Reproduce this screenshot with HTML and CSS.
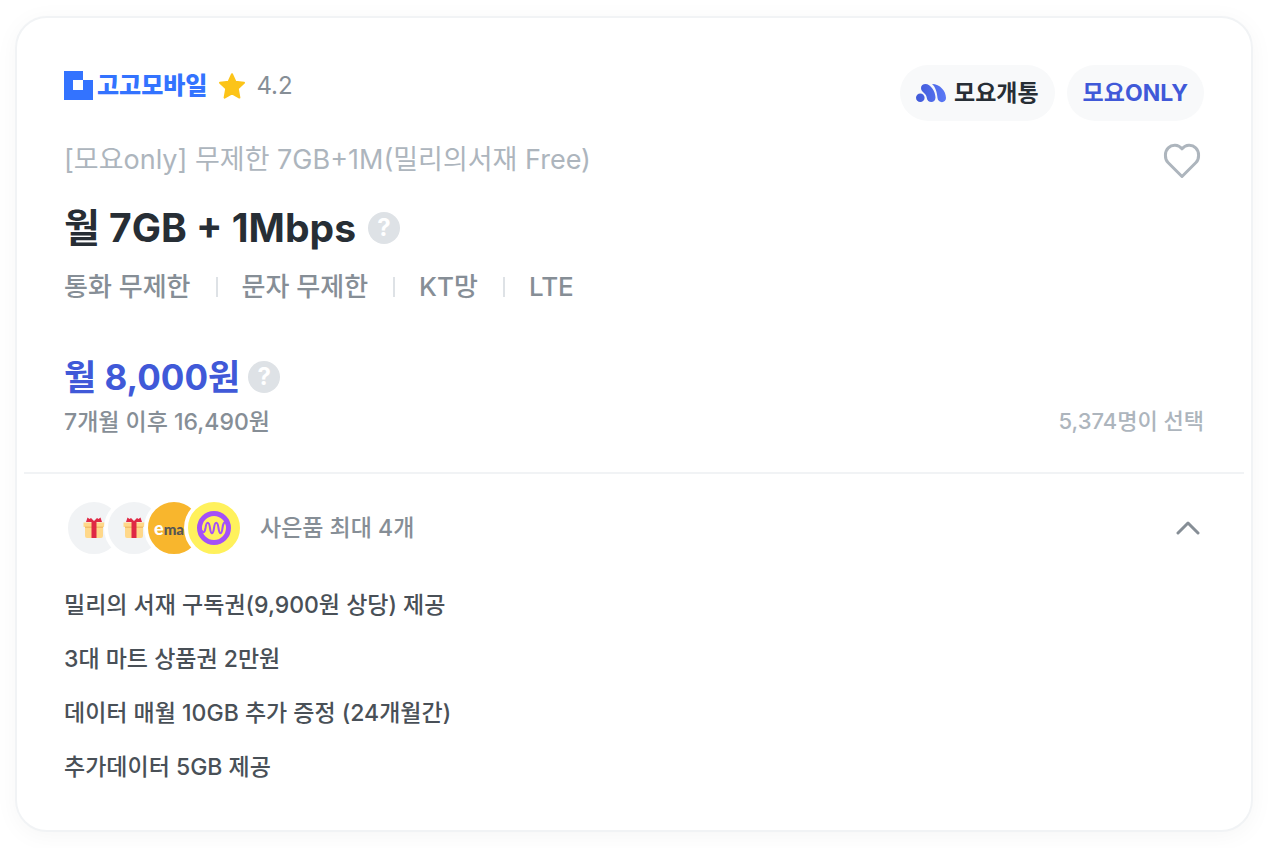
FILE: index.html
```html
<!DOCTYPE html>
<html lang="ko">
<head>
<meta charset="utf-8">
<meta name="viewport" content="width=device-width, initial-scale=1">
<title>고고모바일 요금제</title>
<link rel="stylesheet" href="styles.css">
</head>
<body>
<article class="card">
  <div class="plan">
    <header class="top">
      <div class="carrier">
        <svg class="carrier-mark" viewBox="0 0 29 29" aria-hidden="true"><path fill="#3373ff" fill-rule="evenodd" d="M0 0H19V9H29V29H0ZM9 9V19H19V9Z"/></svg>
        <span class="carrier-name">고고모바일</span>
        <svg class="star" viewBox="0 0 28 28" aria-hidden="true"><path fill="#fcc419" stroke="#fcc419" stroke-width="2" stroke-linejoin="round" d="M14 2.2 17.4 9.7 26 10.8 19.8 16.6 21.4 25.6 14 21.4 6.6 25.6 8.2 16.6 2 10.8 10.6 9.7Z"/></svg>
        <span class="rating">4.2</span>
      </div>
      <div class="badges">
        <span class="badge">
          <svg class="badge-mark" viewBox="0 0 30 20" aria-hidden="true">
            <defs><linearGradient id="moyo" gradientUnits="userSpaceOnUse" x1="0" x2="30" y1="0" y2="0"><stop offset="0" stop-color="#4059d8"/><stop offset="1" stop-color="#5b79f6"/></linearGradient></defs>
            <g fill="url(#moyo)"><circle cx="4.300" cy="14.700" r="4.300"/><path d="M9.500 1C14.500 1 19.500 8.500 19.500 14.500C19.500 20.500 11.200 20.500 10.700 14.500C10.400 10 5 9.500 5 5C5 2.500 7 1 9.500 1Z"/><path d="M16 1C24 1 30 8 30 15C30 20.500 22 20.500 21.500 15C21 9 19.500 4 16 1Z"/></g>
          </svg>
          모요개통
        </span>
        <span class="badge badge-only">모요ONLY</span>
      </div>
    </header>
    <div class="name-row">
      <p class="plan-name">[모요only] 무제한 7GB+1M(밀리의서재 Free)</p>
      <button class="icon-button" type="button" aria-label="찜하기">
        <svg class="heart" viewBox="0 0 44 44" aria-hidden="true"><path fill="none" stroke="#adb5bd" stroke-width="3" stroke-linejoin="round" d="M22 38.500 8 24.500C4.500 21 4.500 13.500 8.300 9.900C12 6.200 18.300 6.300 22 10.800C25.700 6.300 32 6.200 35.700 9.900C39.500 13.500 39.500 21 36 24.500Z"/></svg>
      </button>
    </div>
    <div class="data-row">
      <h2 class="data">월 7GB + 1Mbps</h2>
      <button class="help" type="button" aria-label="데이터 안내">?</button>
    </div>
    <ul class="specs">
      <li class="spec">통화 무제한</li>
      <li class="spec">문자 무제한</li>
      <li class="spec">KT망</li>
      <li class="spec">LTE</li>
    </ul>
    <div class="price-row">
      <strong class="price">월 8,000원</strong>
      <button class="help" type="button" aria-label="가격 안내">?</button>
    </div>
    <div class="after-row">
      <span class="after">7개월 이후 16,490원</span>
      <span class="picked">5,374명이 선택</span>
    </div>
  </div>
  <section class="gifts">
    <button class="gift-toggle" type="button" aria-expanded="true">
      <span class="gift-icons">
        <span class="gift"><svg class="gift-box" viewBox="0 0 22 22" aria-hidden="true"><path fill="#ffd88a" d="M0.500 5.500H21.500V10H20V19Q20 21 18 21H4Q2 21 2 19V10H0.500Z"/><path fill="#f3bd69" d="M2 9.500H20V11H2Z"/><path fill="#df2844" d="M8.500 5H13.500V21H8.500ZM11 4 14 1 15.500 2 17.500 0.500 19 5H3L4.500 0.500 6.500 2 8 1Z"/></svg></span>
        <span class="gift"><svg class="gift-box" viewBox="0 0 22 22" aria-hidden="true"><path fill="#ffd88a" d="M0.500 5.500H21.500V10H20V19Q20 21 18 21H4Q2 21 2 19V10H0.500Z"/><path fill="#f3bd69" d="M2 9.500H20V11H2Z"/><path fill="#df2844" d="M8.500 5H13.500V21H8.500ZM11 4 14 1 15.500 2 17.500 0.500 19 5H3L4.500 0.500 6.500 2 8 1Z"/></svg></span>
        <span class="gift gift-emart"><span class="emart"><span class="emart-e">e</span>mart</span></span>
        <span class="gift gift-millie"><svg class="millie" viewBox="0 0 36 36" aria-hidden="true"><circle cx="18" cy="18" r="14.500" fill="none" stroke="#a450f7" stroke-width="5"/><path fill="none" stroke="#a450f7" stroke-width="2" stroke-linecap="round" d="M6 21C8 24 9 21 9.500 18C10.500 11 13 11 14 18C15 25 17 25 18 18C19 11 21.500 11 22.500 18C23.500 25 25.500 25 26.500 18C27 14 28 11 31 12"/></svg></span>
      </span>
      <span class="gift-count">사은품 최대 4개</span>
      <svg class="chevron" viewBox="0 0 24 14" aria-hidden="true"><path fill="none" stroke="#868e96" stroke-width="3" stroke-linecap="round" stroke-linejoin="round" d="M2 12 12 2 22 12"/></svg>
    </button>
    <ul class="gift-list">
      <li>밀리의 서재 구독권(9,900원 상당) 제공</li>
      <li>3대 마트 상품권 2만원</li>
      <li>데이터 매월 10GB 추가 증정 (24개월간)</li>
      <li>추가데이터 5GB 제공</li>
    </ul>
  </section>
</article>
</body>
</html>
```

FILE: styles.css
```css
* { box-sizing: border-box; }
body {
  margin: 0;
  padding: 16px 17px 18px 15px;
  background: #fff;
  font-family: Inter, "Noto Sans CJK KR", sans-serif;
  font-weight: 500;
  color: #272e35;
}
p, h2, ul { margin: 0; padding: 0; }
ul { list-style: none; }
button { border: 0; padding: 0; background: none; font: inherit; color: inherit; cursor: pointer; }
svg { display: block; flex: none; }

.card {
  border: 2px solid #f1f3f5;
  border-radius: 32px;
  background: #fff;
  box-shadow: 0 4px 24px rgba(0, 0, 0, 0.04);
}
.plan { padding: 47px 47px 29px; }
.top { display: flex; justify-content: space-between; align-items: flex-start; }
.carrier { display: flex; align-items: center; height: 41px; }
.carrier-mark { width: 29px; height: 29px; }
.carrier-name {
  margin-left: 4px;
  font-size: 24px;
  font-weight: 900;
  line-height: 30px;
  color: #3373ff;
}
.star { width: 28px; height: 28px; margin-left: 11px; }
.rating { margin-left: 10px; font-size: 24px; font-weight: 400; line-height: 30px; color: #868e96; }
.badges { display: flex; gap: 12px; }
.badge {
  display: flex;
  align-items: center;
  gap: 8px;
  height: 56px;
  padding: 0 16px;
  border-radius: 28px;
  background: #f8f9fa;
  font-size: 23px;
  font-weight: 700;
  line-height: 32px;
}
.badge-mark { width: 30px; height: 20px; }
.badge-only { color: #4059d8; }

.name-row { display: flex; justify-content: space-between; align-items: center; height: 78px; }
.plan-name { font-size: 27px; font-weight: 400; line-height: 40px; color: #adb5bd; }
.heart { width: 44px; height: 44px; }
.data-row { display: flex; align-items: center; gap: 12px; height: 58px; }
.data { font-size: 39px; font-weight: 700; line-height: 58px; }
.help {
  width: 32px;
  height: 32px;
  border-radius: 50%;
  background: #dee2e6;
  color: #fff;
  font-size: 24px;
  font-weight: 700;
  line-height: 32px;
}
.specs { display: flex; height: 60px; align-items: center; }
.spec { display: flex; align-items: center; font-size: 26px; line-height: 40px; color: #868e96; }
.spec + .spec::before { content: ""; width: 2px; height: 20px; margin: 0 24px 0 25px; background: #dee2e6; }
.price-row { display: flex; align-items: center; gap: 8px; height: 48px; margin-top: 36px; }
.price { font-size: 35px; font-weight: 700; line-height: 48px; color: #4059d8; }
.after-row {
  display: flex;
  justify-content: space-between;
  align-items: flex-start;
}
.after { font-size: 23px; line-height: 42px; color: #868e96; }
.picked { font-size: 22px; line-height: 40px; color: #adb5bd; }

.gifts { margin: 0 7px; padding: 24px 40px 45px; border-top: 2px solid #f1f3f5; }
.gift-toggle { display: flex; align-items: center; width: 100%; height: 60px; text-align: left; }
.gift-icons { display: flex; }
.gift {
  display: flex;
  align-items: center;
  justify-content: center;
  width: 60px;
  height: 60px;
  border: 4px solid #fff;
  border-radius: 50%;
  background: #f1f3f5;
  overflow: hidden;
}
.gift + .gift { margin-left: -20px; }
.gift-box { width: 22px; height: 22px; }
.gift-emart { justify-content: flex-start; padding-left: 6px; background: #f8b62d; }
.gift-millie { background: #fff15c; }
.emart { font-family: Lato, sans-serif; font-size: 15px; font-weight: 900; line-height: 24px; color: #555; }
.emart-e { font-size: 18px; color: #fff; }
.millie { width: 36px; height: 36px; }
.gift-count { margin-left: 16px; font-size: 23px; line-height: 36px; color: #868e96; }
.chevron { width: 24px; height: 14px; margin: 0 4px 0 auto; }
.gift-list { display: grid; gap: 18px; margin-top: 29px; font-size: 23px; line-height: 36px; color: #495057; }
```
